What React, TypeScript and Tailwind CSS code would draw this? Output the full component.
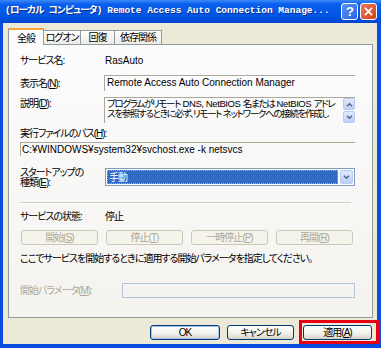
const Chevron = ({ up = false }: { up?: boolean }) => (
  <svg viewBox="0 0 8 6" className="w-[7px] h-[5px]">
    <path
      d={up ? "M1 5 L4 2 L7 5" : "M1 1 L4 4 L7 1"}
      fill="none"
      stroke="#4D6185"
      strokeWidth="1.6"
    />
  </svg>
);

const ArrowBtn = ({ up = false, className = "" }: { up?: boolean; className?: string }) => (
  <div
    className={`flex items-center justify-center rounded-[2px] border border-[#B7CAF5] bg-[linear-gradient(to_bottom,#E1EAFE,#BCCFF7)] ${className}`}
  >
    <Chevron up={up} />
  </div>
);

const DisabledBtn = ({ children }: { children: React.ReactNode }) => (
  <div className="w-[77px] h-[15px] flex items-center justify-center rounded-[3px] border border-[#C9C7BA] bg-[#F5F4EA] text-[#ACA899] leading-none">
    {children}
  </div>
);

const Btn = ({
  children,
  className = "",
  isDefault = false,
}: {
  children: React.ReactNode;
  className?: string;
  isDefault?: boolean;
}) => (
  <div
    className={`h-[15px] shrink-0 flex items-center justify-center rounded-[3px] border border-[#003C74] bg-[linear-gradient(to_bottom,#FFFFFF,#F0F0EA_60%,#D6D0C5)] leading-none ${
      isDefault ? "shadow-[inset_0_0_0_1px_#A6C3F2]" : ""
    } ${className}`}
  >
    {children}
  </div>
);

// latin runs keep normal spacing, the japanese text is squeezed
const En = ({ children }: { children: React.ReactNode }) => (
  <span className="tracking-normal">{children}</span>
);

export default function App() {
  return (
    <div className="w-[381px] h-[348px] overflow-hidden bg-[#0A4CE0] font-['Liberation_Sans','Noto_Sans_CJK_JP',sans-serif] text-[10px] tracking-[-1px] text-black [font-feature-settings:'palt']">
      <div className="flex flex-col w-full h-full">
        {/* title bar */}
        <div className="h-[23px] shrink-0 flex items-center pl-[5px] pr-[4px] bg-[linear-gradient(to_bottom,#3A8AF8,#0A5EEC_18%,#0055E5_70%,#0046CF)]">
          <span className="flex-1 min-w-0 whitespace-nowrap overflow-hidden text-white font-bold text-[9.5px] tracking-normal font-['Liberation_Mono','Noto_Sans_CJK_JP',monospace] [text-shadow:1px_1px_0_#0A2E8A]">
            <span className="tracking-[-0.8px]">(ローカル コンピュータ)</span> Remote Access Auto Connection Manage...
          </span>
          <div className="w-[17px] h-[17px] shrink-0 ml-[2px] flex items-center justify-center rounded-[3px] border border-white bg-[linear-gradient(135deg,#5C93F7,#2763E3)] text-white font-bold text-[13px] leading-none font-['Liberation_Sans',sans-serif]">
            ?
          </div>
          <div className="w-[17px] h-[17px] shrink-0 ml-[2px] flex items-center justify-center rounded-[3px] border border-white bg-[linear-gradient(135deg,#EB7A58,#D2411B)]">
            <svg viewBox="0 0 10 10" className="w-[9px] h-[9px]">
              <path d="M1 1 L9 9 M9 1 L1 9" stroke="white" strokeWidth="2" />
            </svg>
          </div>
        </div>

        {/* client area */}
        <div className="flex-1 flex flex-col ml-[3px] mr-[4px] mb-[4px] bg-[#ECE9D8] pt-[5px] pl-[5px] pr-[4px]">
          {/* tabs */}
          <div className="h-[16px] flex items-end whitespace-nowrap">
            <div className="relative z-10 w-[36px] h-[17px] mb-[-1px] flex items-center justify-center border-x border-[#919B9C] border-t-[2px] border-t-[#F3A53A] bg-[#FCFCFE] pt-[1px]">
              全般
            </div>
            <div className="w-[37px] h-[14px] flex items-center justify-center border-t border-r border-[#919B9C] bg-[linear-gradient(to_bottom,#FFFFFF,#ECEBE6)]">
              ログオン
            </div>
            <div className="w-[34px] h-[14px] flex items-center justify-center border-t border-r border-[#919B9C] bg-[linear-gradient(to_bottom,#FFFFFF,#ECEBE6)]">
              回復
            </div>
            <div className="w-[47px] h-[14px] flex items-center justify-center border-t border-r border-[#919B9C] bg-[linear-gradient(to_bottom,#FFFFFF,#ECEBE6)]">
              依存関係
            </div>
          </div>

          {/* panel */}
          <div className="h-[274px] flex flex-col border border-[#919B9C] bg-[linear-gradient(to_bottom,#FCFCFE,#F4F3EE)] pl-[11px] pr-[17px]">
            <div className="mt-[9px] h-[14px] leading-[14px] flex whitespace-nowrap">
              <span className="w-[85px]">サービス名:</span>
              <En>RasAuto</En>
            </div>

            <div className="mt-[7px] h-[16px] flex items-center whitespace-nowrap">
              <span className="w-[84px]">
                表示名(<u>N</u>):
              </span>
              <div className="flex-1 h-[16px] border-t border-l border-[#ACA899] pl-[2px] leading-[14px] overflow-hidden tracking-normal">
                Remote Access Auto Connection Manager
              </div>
            </div>

            <div className="mt-[6px] flex items-start whitespace-nowrap">
              <span className="w-[84px] leading-[14px]">
                説明(<u>D</u>):
              </span>
              <div className="flex-1 min-w-0 h-[26px] flex border-t border-l border-[#ACA899] overflow-hidden">
                <div className="flex-1 min-w-0 overflow-hidden pl-[2px] pt-[1px] leading-[10px] text-[9.5px] tracking-[-1.3px]">
                  <div>
                    プログラムがリモート
                    <span className="tracking-[-0.4px]"> DNS, NetBIOS </span>
                    名または
                    <span className="tracking-[-0.4px]"> NetBIOS </span>
                    アドレ
                  </div>
                  <div>スを参照するときに必ず、リモート ネットワークへの接続を作成し</div>
                </div>
                <div className="w-[12px] shrink-0 flex flex-col gap-[1px]">
                  <ArrowBtn up className="h-[12px]" />
                  <ArrowBtn className="h-[12px]" />
                </div>
              </div>
            </div>

            <div className="mt-[4px] h-[14px] leading-[14px] whitespace-nowrap">
              実行ファイルのパス(<u>H</u>):
            </div>
            <div className="mt-[1px] h-[14px] border-t border-l border-[#ACA899] pl-[1px] leading-[13px] whitespace-nowrap overflow-hidden tracking-normal">
              C:¥WINDOWS¥system32¥svchost.exe -k netsvcs
            </div>

            <div className="mt-[12px] flex items-start">
              <div className="w-[85px] leading-[10px] whitespace-nowrap">
                <div>スタートアップの</div>
                <div>
                  種類(<u>E</u>):
                </div>
              </div>
              <div className="flex-1 h-[18px] flex items-center gap-[2px] border border-[#7F9DB9] bg-white p-[1px]">
                <div className="flex-1 h-full flex items-center bg-[#316AC5] text-white pl-[2px] outline-1 outline-dotted outline-[#C8B35A] outline-offset-[-1px]">
                  手動
                </div>
                <ArrowBtn className="w-[13px] h-[14px]" />
              </div>
            </div>

            <div className="mt-[14px] mr-[4px] h-[2px] border-t border-[#D0CDBF] border-b border-b-white" />

            <div className="mt-[6px] h-[14px] leading-[14px] flex whitespace-nowrap">
              <span className="w-[85px]">サービスの状態:</span>
              <span>停止</span>
            </div>

            <div className="mt-[6px] ml-[1px] flex gap-[8px] whitespace-nowrap">
              <DisabledBtn>
                開始(<u>S</u>)
              </DisabledBtn>
              <DisabledBtn>
                停止(<u>T</u>)
              </DisabledBtn>
              <DisabledBtn>
                一時停止(<u>P</u>)
              </DisabledBtn>
              <DisabledBtn>
                再開(<u>R</u>)
              </DisabledBtn>
            </div>

            <div className="mt-[7px] h-[14px] leading-[14px] whitespace-nowrap">
              ここでサービスを開始するときに適用する開始パラメータを指定してください。
            </div>

            <div className="mt-[17px] flex items-center whitespace-nowrap">
              <span className="w-[102px] text-[#ACA899]">
                開始パラメータ(<u>M</u>):
              </span>
              <div className="flex-1 h-[15px] border border-[#B4C3DA]" />
            </div>
          </div>

          {/* dialog buttons */}
          <div className="mt-[7px] flex justify-end pr-[1px] whitespace-nowrap">
            <Btn isDefault className="w-[70px]">
              OK
            </Btn>
            <Btn className="w-[67px] ml-[7px]">キャンセル</Btn>
            <div className="relative ml-[9px]">
              <Btn className="w-[69px]">
                適用(<u>A</u>)
              </Btn>
              <div className="absolute -left-[4px] -top-[5px] -right-[7px] -bottom-[4px] border-[3px] border-[#E60012]" />
            </div>
          </div>
        </div>
      </div>
    </div>
  );
}
